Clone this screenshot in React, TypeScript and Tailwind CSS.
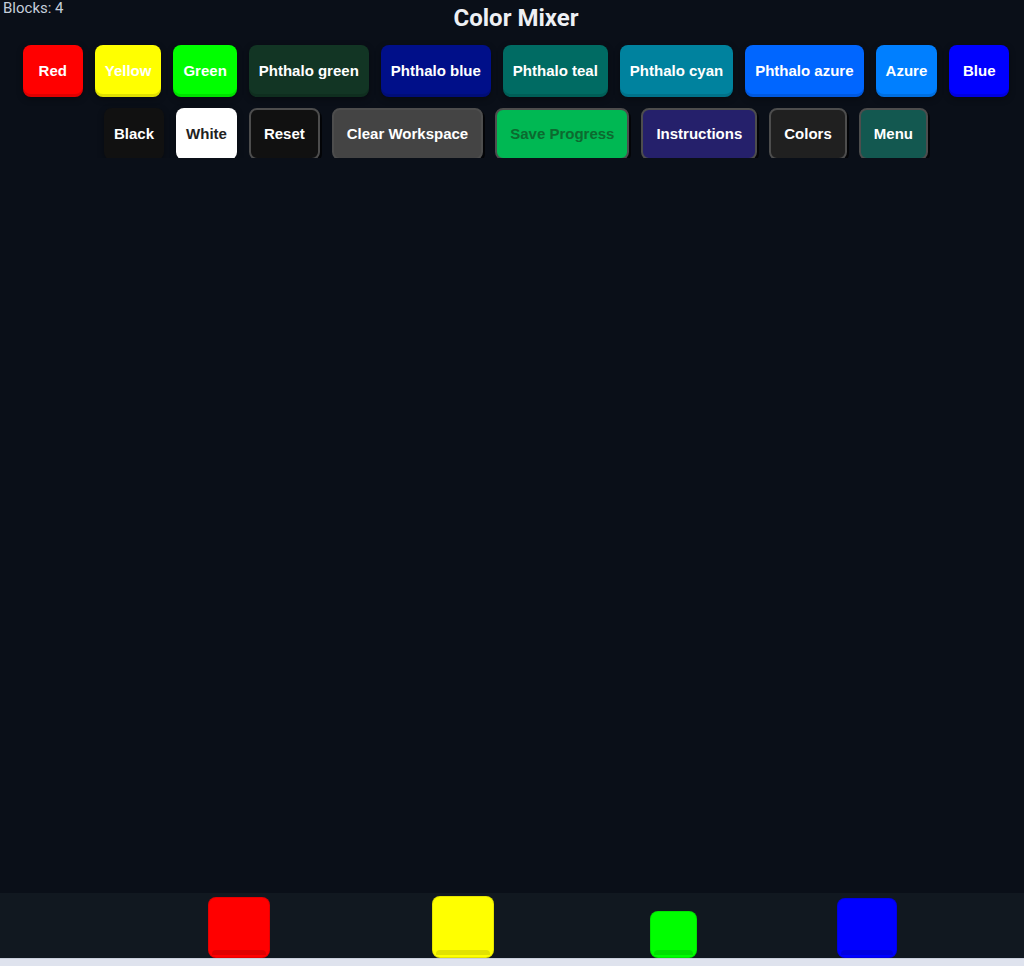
import { useState } from "react";

type Swatch = {
  name: string;
  bg: string;
  text?: string;
};

type Block = {
  id: number;
  color: string;
  shade: string;
  left: number;
  size: number;
  height: number;
};

const palette: Swatch[] = [
  { name: "Red", bg: "bg-[#ff0000]" },
  { name: "Yellow", bg: "bg-[#ffff00]" },
  { name: "Green", bg: "bg-[#00ff00]" },
  { name: "Phthalo green", bg: "bg-[#123524]" },
  { name: "Phthalo blue", bg: "bg-[#000f89]" },
  { name: "Phthalo teal", bg: "bg-[#006b63]" },
  { name: "Phthalo cyan", bg: "bg-[#00829e]" },
  { name: "Phthalo azure", bg: "bg-[#0066ff]" },
  { name: "Azure", bg: "bg-[#007fff]" },
  { name: "Blue", bg: "bg-[#0000ff]" },
];

const tools: (Swatch & { framed?: boolean })[] = [
  { name: "Black", bg: "bg-[#111111]" },
  { name: "White", bg: "bg-white", text: "text-[#222222]" },
  { name: "Reset", bg: "bg-[#111111]", framed: true },
  { name: "Clear Workspace", bg: "bg-[#444444]", framed: true },
  { name: "Save Progress", bg: "bg-[#00b853]", text: "text-[#0c6a2f]", framed: true },
  { name: "Instructions", bg: "bg-[#25206b]", framed: true },
  { name: "Colors", bg: "bg-[#202020]", framed: true },
  { name: "Menu", bg: "bg-[#135850]", framed: true },
];

const initialBlocks: Block[] = [
  { id: 1, color: "bg-[#ff0000]", shade: "bg-[#e00000]", left: 208, size: 62, height: 61 },
  { id: 2, color: "bg-[#ffff00]", shade: "bg-[#e2e200]", left: 432, size: 62, height: 62 },
  { id: 3, color: "bg-[#00ff00]", shade: "bg-[#00e000]", left: 650, size: 47, height: 47 },
  { id: 4, color: "bg-[#0000ff]", shade: "bg-[#0000e0]", left: 837, size: 60, height: 60 },
];

function App() {
  const [blocks] = useState<Block[]>(initialBlocks);

  return (
    <div className="h-[966px] w-full flex flex-col bg-[#0a0f18] overflow-hidden font-['Liberation_Sans',Arial,sans-serif]">
      {/* header */}
      <div className="relative h-[34px] pl-2 flex justify-center items-center shrink-0">
        <div className="absolute top-0 left-[3px] text-[15px] leading-[16px] text-[#c5ceda] font-['Roboto',sans-serif]">
          Blocks: {blocks.length}
        </div>
        <h1 className="text-[24px] leading-[30px] font-bold text-[#eef0f4] font-['Roboto',sans-serif] pt-[2px]">
          Color Mixer
        </h1>
      </div>

      {/* toolbar */}
      <div className="h-[124px] shrink-0 pl-2 pt-[11px] overflow-hidden flex flex-col items-center gap-[11px]">
        <div className="flex gap-3">
          {palette.map((c) => (
            <button
              key={c.name}
              className={`${c.bg} ${c.text ?? "text-white"} h-[52px] min-w-[60px] px-[10px] rounded-lg text-[15px] font-bold shadow-[inset_0_-3px_0_rgba(0,0,0,0.12),0_2px_6px_rgba(0,0,0,0.35)]`}
            >
              {c.name}
            </button>
          ))}
        </div>
        <div className="flex gap-3">
          {tools.map((t) => (
            <button
              key={t.name}
              className={`${t.bg} ${t.text ?? "text-white"} h-[52px] min-w-[60px] rounded-lg text-[15px] font-bold ${
                t.framed
                  ? "px-[13px] border-2 border-[#4d4d4d] shadow-[2px_2px_0_rgba(0,0,0,0.7)]"
                  : "px-[10px] shadow-[0_2px_6px_rgba(0,0,0,0.35)]"
              }`}
            >
              {t.name}
            </button>
          ))}
        </div>
      </div>

      {/* workspace */}
      <div className="flex-1" />

      {/* block tray */}
      <div className="relative h-[65px] shrink-0 bg-[#111820]">
        {blocks.map((b) => (
          <div
            key={b.id}
            className={`absolute bottom-0 ${b.color} rounded-lg border border-black/10 flex items-end justify-center px-[3px] pb-[2px]`}
            style={{ left: b.left, width: b.size, height: b.height }}
          >
            <div className={`${b.shade} h-[5px] w-full rounded-t-sm`} />
          </div>
        ))}
      </div>
      <div className="h-[8px] shrink-0 bg-[#dfe3ee] border-t border-[#c9cfdc]" />
    </div>
  );
}

export default App;
